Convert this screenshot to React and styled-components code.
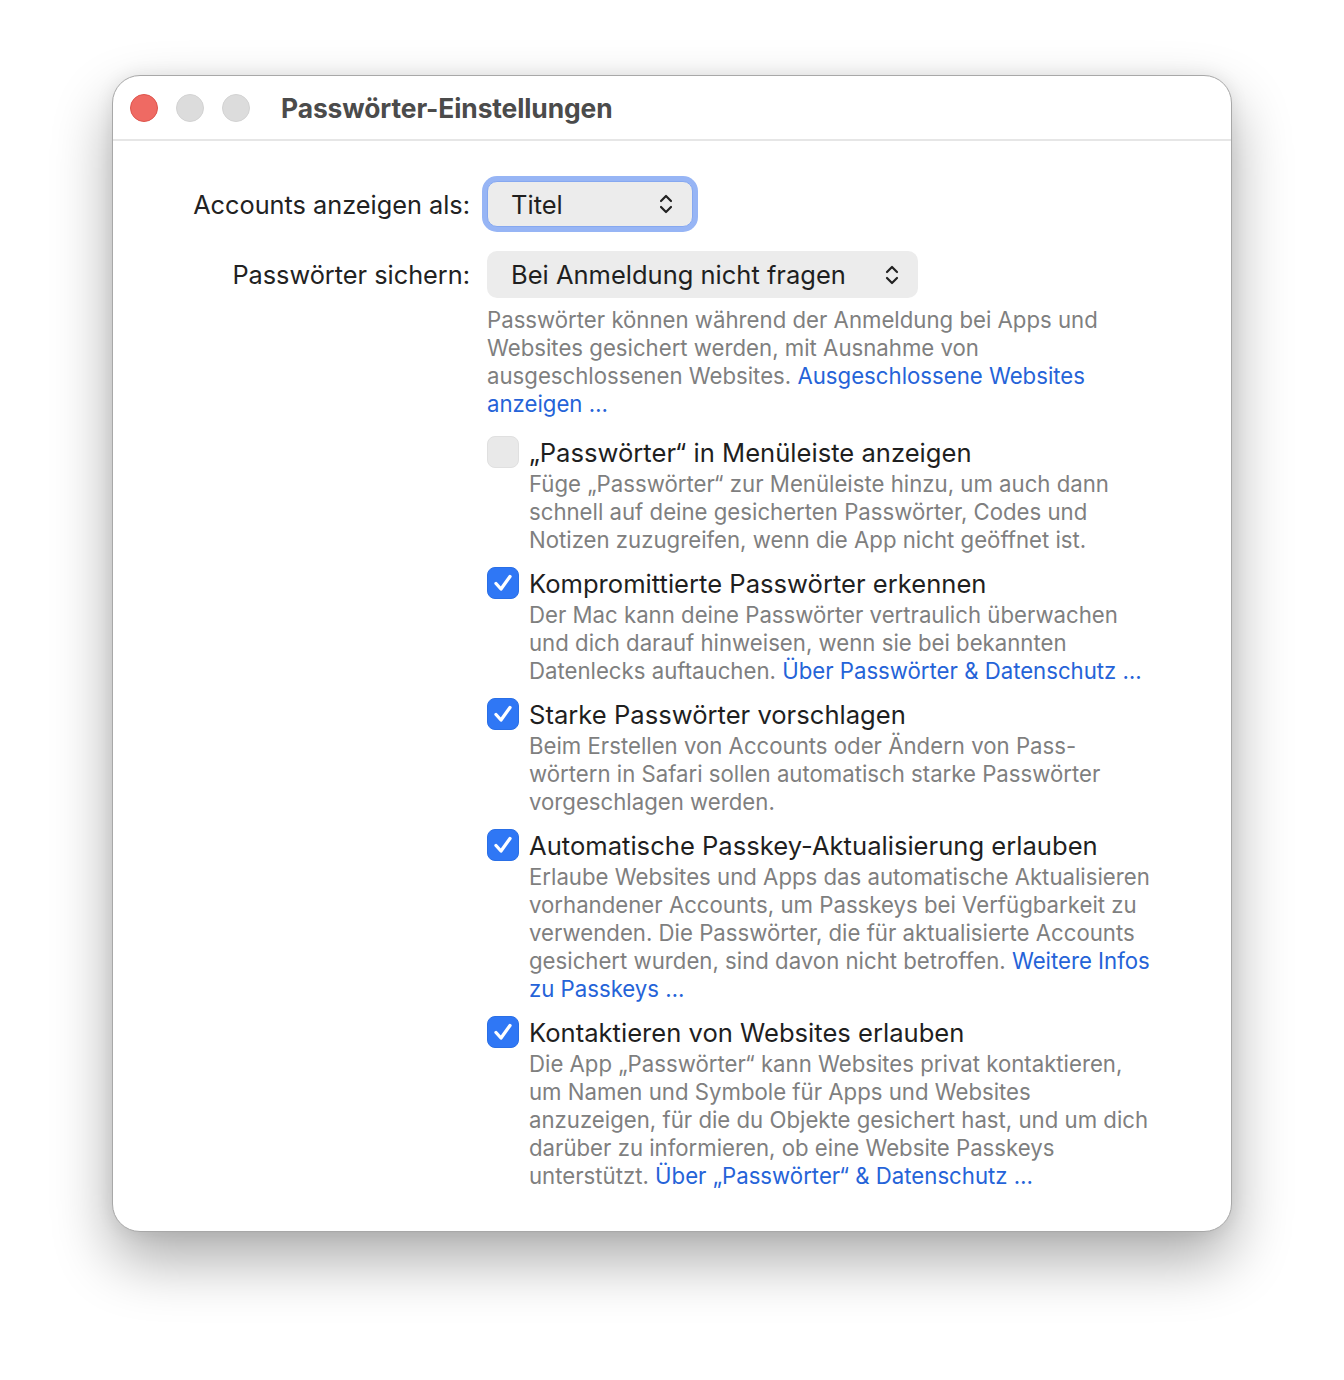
import React from 'react';
import styled, {createGlobalStyle} from 'styled-components';

// Page reset.
const GlobalStyle = createGlobalStyle`
  html, body {
    margin: 0;
    padding: 0;
    background: #ffffff;
  }
  body {
    font-family: Inter, "Noto Sans", "Liberation Sans", sans-serif;
    -webkit-font-smoothing: antialiased;
  }
`;

const Page = styled.div`
  width: 1344px;
  height: 1380px;
  padding: 75px 0 0 112px;
  box-sizing: border-box;
`;

const Window = styled.div`
  width: 1120px;
  height: 1157px;
  box-sizing: border-box;
  background: #ffffff;
  border: 1px solid #a8a8a8;
  border-radius: 28px;
  box-shadow: 0 28px 60px rgba(0, 0, 0, 0.33), 0 0 18px rgba(0, 0, 0, 0.08);
  overflow: hidden;
  display: flex;
  flex-direction: column;
`;

const TitleBar = styled.div`
  height: 63px;
  flex-shrink: 0;
  display: flex;
  align-items: center;
  padding-left: 17px;
  border-bottom: 2px solid #e6e6e6;
`;

const Lights = styled.div`
  display: flex;
  gap: 18px;
  margin-right: 31px;
`;

const Light = styled.span`
  width: 28px;
  height: 28px;
  border-radius: 50%;
  box-sizing: border-box;
  background: ${(p) => (p.$red ? '#ef6a63' : '#dcdcdc')};
  border: 1px solid ${(p) => (p.$red ? '#dd544c' : '#d2d2d2')};
`;

const Title = styled.div`
  font-size: 26.4px;
  font-weight: 700;
  color: #4b4b4b;
  letter-spacing: -0.1px;
`;

const Content = styled.div`
  display: grid;
  grid-template-columns: 357px 1fr;
  column-gap: 17px;
  padding-top: 40px;
`;

const Label = styled.div`
  font-size: 25.3px;
  color: #222222;
  text-align: right;
  height: ${(p) => p.$h}px;
  display: flex;
  align-items: center;
  justify-content: flex-end;
  margin-top: ${(p) => p.$mt || 0}px;
`;

const Control = styled.div`
  margin-top: ${(p) => p.$mt || 0}px;
`;

const Popup = styled.div`
  display: inline-flex;
  align-items: center;
  justify-content: space-between;
  box-sizing: border-box;
  width: ${(p) => p.$w}px;
  height: ${(p) => p.$h}px;
  padding: 0 18px 0 24px;
  border-radius: 10px;
  background: #ececec;
  font-size: 25.5px;
  color: #1f1f1f;
  ${(p) =>
    p.$focused &&
    `
    padding-left: 23px;
    border: 1px solid #86a8f0;
    box-shadow: 0 0 0 5px #97b5f5;
  `}
`;

const Chevrons = () => (
  <svg width="16" height="24" viewBox="0 0 16 24" fill="none">
    <path d="M3 9 L8 4 L13 9" stroke="#222" strokeWidth="2.2" strokeLinecap="round" strokeLinejoin="round" />
    <path d="M3 15 L8 20 L13 15" stroke="#222" strokeWidth="2.2" strokeLinecap="round" strokeLinejoin="round" />
  </svg>
);

const Desc = styled.p`
  margin: 0;
  font-size: 22.2px;
  line-height: 28px;
  color: #7f7f7f;
  white-space: nowrap;
`;

const Link = styled.span`
  color: #2563d8;
`;

const Options = styled.div`
  display: flex;
  flex-direction: column;
  gap: 12px;
  margin-top: 17px;
`;

const Option = styled.div`
  display: grid;
  grid-template-columns: 32px 1fr;
  column-gap: 10px;
`;

const Box = styled.span`
  width: 32px;
  height: 32px;
  margin-top: 1px;
  box-sizing: border-box;
  border-radius: 8px;
  display: flex;
  align-items: center;
  justify-content: center;
  background: ${(p) => (p.$checked ? '#2f77f5' : '#e9e9e9')};
  border: 1px solid ${(p) => (p.$checked ? '#2a6fe6' : '#e0e0e0')};
`;

const OptionTitle = styled.div`
  font-size: 25.6px;
  line-height: 35px;
  color: #1f1f1f;
  white-space: nowrap;
`;

const Check = () => (
  <svg width="24" height="24" viewBox="0 0 24 24" fill="none">
    <path d="M5 12.5 L10 18 L19 5.5" stroke="#fff" strokeWidth="3.3" strokeLinecap="round" strokeLinejoin="round" />
  </svg>
);

const options = [
  {
    checked: false,
    title: '„Passwörter“ in Menüleiste anzeigen',
    lines: [
      ['Füge „Passwörter“ zur Menüleiste hinzu, um auch dann'],
      ['schnell auf deine gesicherten Passwörter, Codes und'],
      ['Notizen zuzugreifen, wenn die App nicht geöffnet ist.'],
    ],
  },
  {
    checked: true,
    title: 'Kompromittierte Passwörter erkennen',
    lines: [
      ['Der Mac kann deine Passwörter vertraulich überwachen'],
      ['und dich darauf hinweisen, wenn sie bei bekannten'],
      ['Datenlecks auftauchen. ', 'Über Passwörter & Datenschutz …'],
    ],
  },
  {
    checked: true,
    title: 'Starke Passwörter vorschlagen',
    lines: [
      ['Beim Erstellen von Accounts oder Ändern von Pass-'],
      ['wörtern in Safari sollen automatisch starke Passwörter'],
      ['vorgeschlagen werden.'],
    ],
  },
  {
    checked: true,
    title: 'Automatische Passkey-Aktualisierung erlauben',
    lines: [
      ['Erlaube Websites und Apps das automatische Aktualisieren'],
      ['vorhandener Accounts, um Passkeys bei Verfügbarkeit zu'],
      ['verwenden. Die Passwörter, die für aktualisierte Accounts'],
      ['gesichert wurden, sind davon nicht betroffen. ', 'Weitere Infos'],
      ['', 'zu Passkeys …'],
    ],
  },
  {
    checked: true,
    title: 'Kontaktieren von Websites erlauben',
    lines: [
      ['Die App „Passwörter“ kann Websites privat kontaktieren,'],
      ['um Namen und Symbole für Apps und Websites'],
      ['anzuzeigen, für die du Objekte gesichert hast, und um dich'],
      ['darüber zu informieren, ob eine Website Passkeys'],
      ['unterstützt. ', 'Über „Passwörter“ & Datenschutz …'],
    ],
  },
];

const renderLines = (lines) =>
  lines.map(([text, link], i) => (
    <React.Fragment key={i}>
      {text}
      {link && <Link>{link}</Link>}
      {i < lines.length - 1 && <br />}
    </React.Fragment>
  ));

export default function App() {
  return (
    <Page>
      <GlobalStyle />
      <Window>
        <TitleBar>
          <Lights>
            <Light $red />
            <Light />
            <Light />
          </Lights>
          <Title>Passwörter-Einstellungen</Title>
        </TitleBar>

        <Content>
          <Label $h={46}>Accounts anzeigen als:</Label>
          <Control>
            <Popup $focused $w={206} $h={46}>
              <span>Titel</span>
              <Chevrons />
            </Popup>
          </Control>

          <Label $h={47} $mt={24}>Passwörter sichern:</Label>
          <Control $mt={24}>
            <Popup $w={431} $h={47}>
              <span>Bei Anmeldung nicht fragen</span>
              <Chevrons />
            </Popup>
            <Desc style={{marginTop: 8}}>
              {renderLines([
                ['Passwörter können während der Anmeldung bei Apps und'],
                ['Websites gesichert werden, mit Ausnahme von'],
                ['ausgeschlossenen Websites. ', 'Ausgeschlossene Websites'],
                ['', 'anzeigen …'],
              ])}
            </Desc>

            <Options>
              {options.map((o) => (
                <Option key={o.title}>
                  <Box $checked={o.checked}>{o.checked && <Check />}</Box>
                  <div>
                    <OptionTitle>{o.title}</OptionTitle>
                    <Desc>{renderLines(o.lines)}</Desc>
                  </div>
                </Option>
              ))}
            </Options>
          </Control>
        </Content>
      </Window>
    </Page>
  );
}
